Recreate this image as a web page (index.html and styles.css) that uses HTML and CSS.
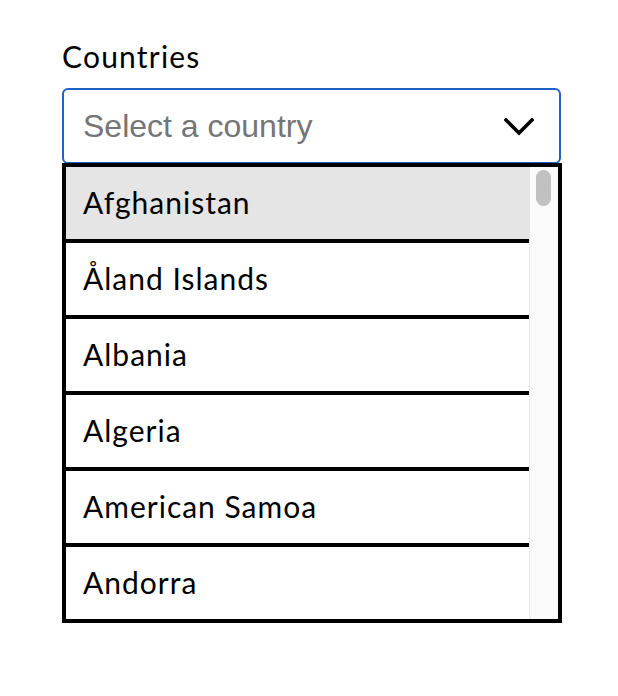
FILE: index.html
```html
<!DOCTYPE html>
<html lang="en">
<head>
<meta charset="utf-8">
<title>Countries</title>
<link rel="stylesheet" href="styles.css">
</head>
<body>
<div class="field">
  <label class="label" id="countries-label">Countries</label>
  <div class="combo" role="combobox" aria-expanded="true" aria-labelledby="countries-label">
    <span class="placeholder">Select a country</span>
    <svg class="chevron" width="30" height="18" viewBox="0 0 30 18" aria-hidden="true">
      <path d="M2 2 L15 15 L28 2" fill="none" stroke="#000" stroke-width="3.6" stroke-linecap="square" stroke-linejoin="miter"/>
    </svg>
  </div>
  <div class="listbox">
    <ul class="options" role="listbox">
      <li class="option active">Afghanistan</li>
      <li class="option">Åland Islands</li>
      <li class="option">Albania</li>
      <li class="option">Algeria</li>
      <li class="option">American Samoa</li>
      <li class="option">Andorra</li>
    </ul>
    <div class="scrollbar" aria-hidden="true">
      <div class="thumb"></div>
    </div>
  </div>
</div>
</body>
</html>
```

FILE: styles.css
```css
html, body {
  margin: 0;
  padding: 0;
  background: #ffffff;
}

body {
  width: 618px;
  height: 696px;
  overflow: hidden;
  font-family: "Lato", "Noto Sans", sans-serif;
  color: #000;
}

.field {
  padding: 38px 0 0 62px;
  width: 500px;
  display: flex;
  flex-direction: column;
}

.label {
  font-size: 30px;
  line-height: 36px;
  height: 36px;
  margin-bottom: 14px;
  letter-spacing: 1.2px;
}

.combo {
  box-sizing: border-box;
  height: 76px;
  width: 499px;
  border: 2px solid #2160c4;
  border-radius: 6px;
  display: flex;
  align-items: center;
  justify-content: space-between;
  padding: 0 25px 0 19px;
  background: #fff;
}

.placeholder {
  font-family: "Liberation Sans", Arial, sans-serif;
  font-size: 32px;
  color: #757575;
}

.chevron {
  display: block;
  margin-top: 2px;
}

.listbox {
  box-sizing: border-box;
  margin: -1px 0 0 0;
  width: 500px;
  height: 460px;
  border: 4px solid #000;
  background: #fff;
  display: flex;
  overflow: hidden;
}

.options {
  list-style: none;
  margin: 0;
  padding: 0;
  flex: 1;
  min-width: 0;
}

.option {
  box-sizing: border-box;
  height: 76px;
  border-bottom: 4px solid #000;
  display: flex;
  align-items: center;
  padding: 0 0 2px 17px;
  font-size: 30px;
  letter-spacing: 1px;
  white-space: nowrap;
}

.option:last-child {
  height: 72px;
  border-bottom: none;
}

.option.active {
  background: #e5e5e5;
}

.scrollbar {
  box-sizing: border-box;
  width: 29px;
  flex: none;
  background: #fafafa;
  border-left: 1px solid #e6e6e6;
  padding: 3px 7px 0 6px;
}

.thumb {
  height: 36px;
  border-radius: 8px;
  background: #c1c1c1;
}
```
